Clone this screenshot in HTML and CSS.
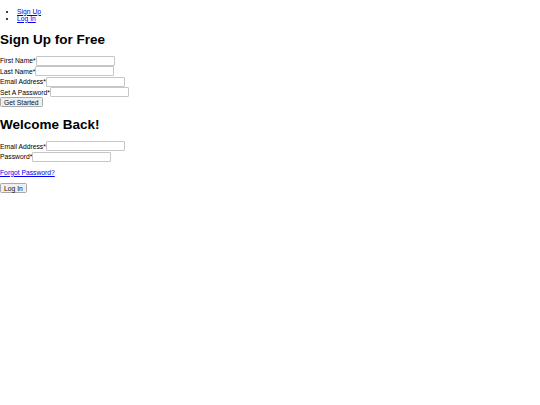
FILE: index.html
```html
<!DOCTYPE html>
<html>
<head>
<meta charset="utf-8">
<title>Sign Up</title>
<link rel="stylesheet" href="styles.css">
</head>
<body>
<ul class="nav">
  <li><a href="#">Sign Up</a></li>
  <li><a href="#">Log In</a></li>
</ul>
<h1 class="title">Sign Up for Free</h1>
<form class="form">
  <div class="row"><label>First Name*</label><input class="field" type="text"></div>
  <div class="row"><label>Last Name*</label><input class="field" type="text"></div>
  <div class="row"><label>Email Address*</label><input class="field" type="email"></div>
  <div class="row"><label>Set A Password*</label><input class="field" type="password"></div>
  <button class="btn" type="button">Get Started</button>
</form>
<h1 class="title">Welcome Back!</h1>
<form class="form">
  <div class="row"><label>Email Address*</label><input class="field" type="email"></div>
  <div class="row"><label>Password*</label><input class="field" type="password"></div>
  <p class="forgot"><a href="#">Forgot Password?</a></p>
  <button class="btn" type="button">Log In</button>
</form>
</body>
</html>
```
FILE: styles.css
```css
html, body {
  background: #fff;
}
body {
  margin: 0;
  font-family: "Liberation Sans", Arial, sans-serif;
  font-size: 6.75px;
  color: #000;
}
a {
  color: #0000ee;
}
.nav {
  margin: 7.5px 0 7.75px;
  padding-left: 17px;
}
.title {
  font-size: 13.5px;
  font-weight: bold;
  margin: 10px 0 9.25px;
}
.form {
  margin: 0;
}
.row {
  display: flex;
  align-items: center;
  height: 10.4px;
}
.field {
  box-sizing: border-box;
  width: 79px;
  height: 10px;
  margin: 0;
  padding: 0 2px;
  border: 1px solid #c6c6c6;
  border-radius: 1px;
  background: #fff;
  font: inherit;
}
.btn {
  box-sizing: border-box;
  height: 9.6px;
  margin: 0;
  padding: 0 3px;
  border: 1px solid #a9a9a9;
  border-radius: 1.5px;
  background: #efefef;
  font-family: "Liberation Sans", Arial, sans-serif;
  font-size: 6.75px;
  line-height: 7px;
  color: #111;
}
.forgot {
  margin: 6.75px 0 7.75px;
}
```
